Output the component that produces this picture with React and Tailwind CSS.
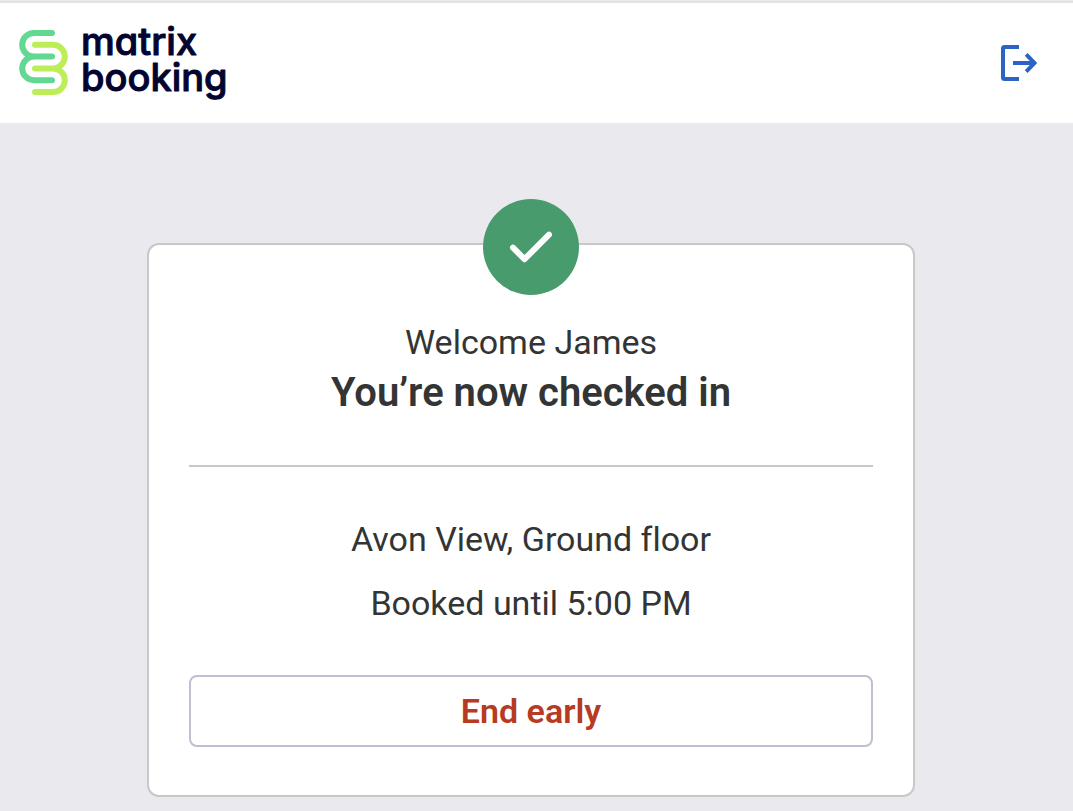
function Logo() {
  return (
    <svg width="220" height="92" viewBox="0 -6 220 92" role="img" aria-label="matrix booking">
      <g fill="none" strokeWidth="6" strokeLinecap="round">
        <path stroke="#62d893" d="M36 10H18a11.8 11.8 0 0 0 0 23.6H36M18 33.6a11.8 11.8 0 0 0 0 23.6H36" />
        <path stroke="#bdee58" d="M19 21.8H37a11.8 11.8 0 0 1 0 23.6H19M37 45.4a11.8 11.8 0 0 1 0 23.6H19" />
      </g>
      <g
        className="font-['Inter',sans-serif] text-[38px] font-medium [font-feature-settings:'cv11']"
        fill="#040430"
        stroke="#040430"
        strokeWidth="1"
        strokeLinejoin="round"
      >
        <text x="65" y="32">matrix</text>
        <text x="65" y="68">booking</text>
      </g>
    </svg>
  );
}

function LogoutIcon() {
  return (
    <svg width="36" height="36" viewBox="0 0 36 36" fill="none" stroke="#2c64c4" strokeWidth="4" aria-hidden="true">
      <path d="M18 2H3.5Q2 2 2 3.5V32.5Q2 34 3.5 34H18" />
      <path d="M12 18H33" />
      <path d="M25.2 9.4L33.5 18L25.2 26.6" />
    </svg>
  );
}

function CheckBadge() {
  return (
    <div className="-mt-[46px] flex size-24 items-center justify-center rounded-full bg-[#479b6d]">
      <svg width="96" height="96" viewBox="0 0 96 96" fill="none" stroke="#fff" strokeWidth="6" aria-hidden="true">
        <path strokeLinecap="round" strokeLinejoin="round" d="M30 48.7L41.5 60.2L66 35.7" />
      </svg>
    </div>
  );
}

export default function App() {
  return (
    <div className="flex min-h-screen flex-col bg-[#eae9ee] pt-px font-['Roboto',sans-serif] text-[#333534] [font-variant-ligatures:none]">
      <header className="flex h-[122px] items-center justify-between border-t-2 border-[#e2e2e2] bg-white pr-9 pl-4">
        <a href="#">
          <Logo />
        </a>
        <button type="button" aria-label="Log out" className="cursor-pointer">
          <LogoutIcon />
        </button>
      </header>

      <main className="grow pt-[120px] pr-[27px] pb-3 pl-4">
        <section className="mx-auto flex max-w-3xl flex-col items-center rounded-xl border-2 border-[#c8c8c8] bg-white px-10 pb-12 text-center">
          <CheckBadge />
          <p className="mt-[25px] text-[34px] leading-11">Welcome James</p>
          <h1 className="mt-[5px] text-[40px] leading-12 font-semibold">You’re now checked in</h1>

          <hr className="mt-12 w-full border-t-2 border-[#c8c8c8]" />

          <div className="mt-10 text-[34px] leading-16">
            <p>Avon View, Ground floor</p>
            <p>Booked until 5:00 PM</p>
          </div>

          <button
            type="button"
            className="mt-10 h-18 w-full cursor-pointer rounded-lg border-2 border-[#bdc0d0] text-[34px] font-semibold text-[#b73a22]"
          >
            End early
          </button>
        </section>
      </main>
    </div>
  );
}
